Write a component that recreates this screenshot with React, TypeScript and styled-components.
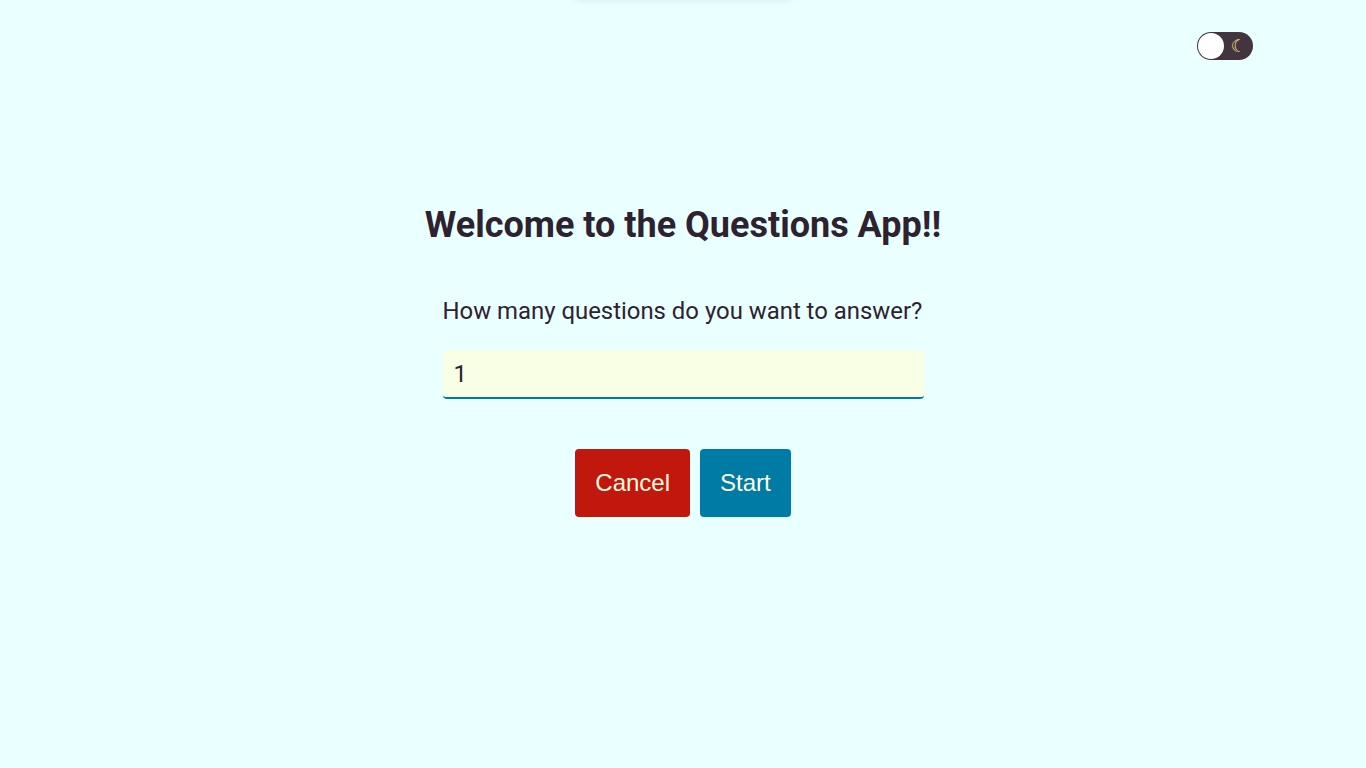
import styled, { createGlobalStyle } from "styled-components";

const GlobalStyle = createGlobalStyle`
  html, body {
    margin: 0;
    padding: 0;
    background: #eaffff;
    font-family: Roboto, "Liberation Sans", Arial, sans-serif;
    color: #2d2330;
  }
`;

const Page = styled.div`
  width: 100%;
  min-height: 100vh;
  position: relative;
  overflow: hidden;
`;

const HiddenToast = styled.div`
  position: absolute;
  top: -60px;
  left: 50%;
  transform: translateX(-50%);
  width: 220px;
  height: 56px;
  background: #eaffff;
  border-radius: 6px;
  box-shadow: 0 2px 8px rgba(0, 40, 40, 0.15);
`;

const TopBar = styled.div`
  display: flex;
  justify-content: flex-end;
  padding: 32px 113px 0 0;
`;

const Toggle = styled.button`
  width: 56px;
  height: 28px;
  border: none;
  border-radius: 14px;
  background: #433540;
  padding: 1px;
  display: flex;
  align-items: center;
  justify-content: space-between;
  cursor: pointer;
`;

const Knob = styled.span`
  width: 26px;
  height: 26px;
  border-radius: 50%;
  background: #ffffff;
`;

const Moon = styled.span`
  color: #f4e08a;
  font-family: "DejaVu Sans", sans-serif;
  font-size: 17px;
  margin-right: 6px;
  line-height: 1;
`;

const Main = styled.main`
  display: flex;
  flex-direction: column;
  align-items: center;
  padding-top: 144px;
`;

const Title = styled.h1`
  margin: 0;
  font-size: 36px;
  font-weight: 700;
  line-height: 42px;
`;

const Form = styled.form`
  width: 481px;
  margin-top: 51px;
  display: flex;
  flex-direction: column;
`;

const Label = styled.label`
  font-size: 23.9px;
  line-height: 28px;
  white-space: nowrap;
`;

const Input = styled.input`
  margin-top: 25px;
  height: 49px;
  box-sizing: border-box;
  border: none;
  border-bottom: 2px solid #007ba0;
  border-radius: 4px;
  background: #f8ffe4;
  padding: 0 11px;
  font-family: Roboto, sans-serif;
  font-size: 24px;
  color: #2d2330;
  outline: none;
`;

const Actions = styled.div`
  display: flex;
  justify-content: center;
  gap: 10px;
  margin-top: 50px;
`;

const Button = styled.button<{ $tone: "danger" | "primary" }>`
  height: 68px;
  padding: 0 20px;
  border: none;
  border-radius: 4px;
  background: ${(p) => (p.$tone === "danger" ? "#c0180c" : "#007ba5")};
  color: #fffbe0;
  font-family: "Liberation Sans", Arial, sans-serif;
  font-size: 24px;
  cursor: pointer;
`;

export default function App() {
  return (
    <Page>
      <GlobalStyle />
      <HiddenToast />
      <TopBar>
        <Toggle aria-label="Toggle dark mode">
          <Knob />
          <Moon>☾</Moon>
        </Toggle>
      </TopBar>
      <Main>
        <Title>Welcome to the Questions App!!</Title>
        <Form onSubmit={(e) => e.preventDefault()}>
          <Label htmlFor="count">How many questions do you want to answer?</Label>
          <Input id="count" type="text" defaultValue="1" />
        </Form>
        <Actions>
          <Button $tone="danger">Cancel</Button>
          <Button $tone="primary">Start</Button>
        </Actions>
      </Main>
    </Page>
  );
}
